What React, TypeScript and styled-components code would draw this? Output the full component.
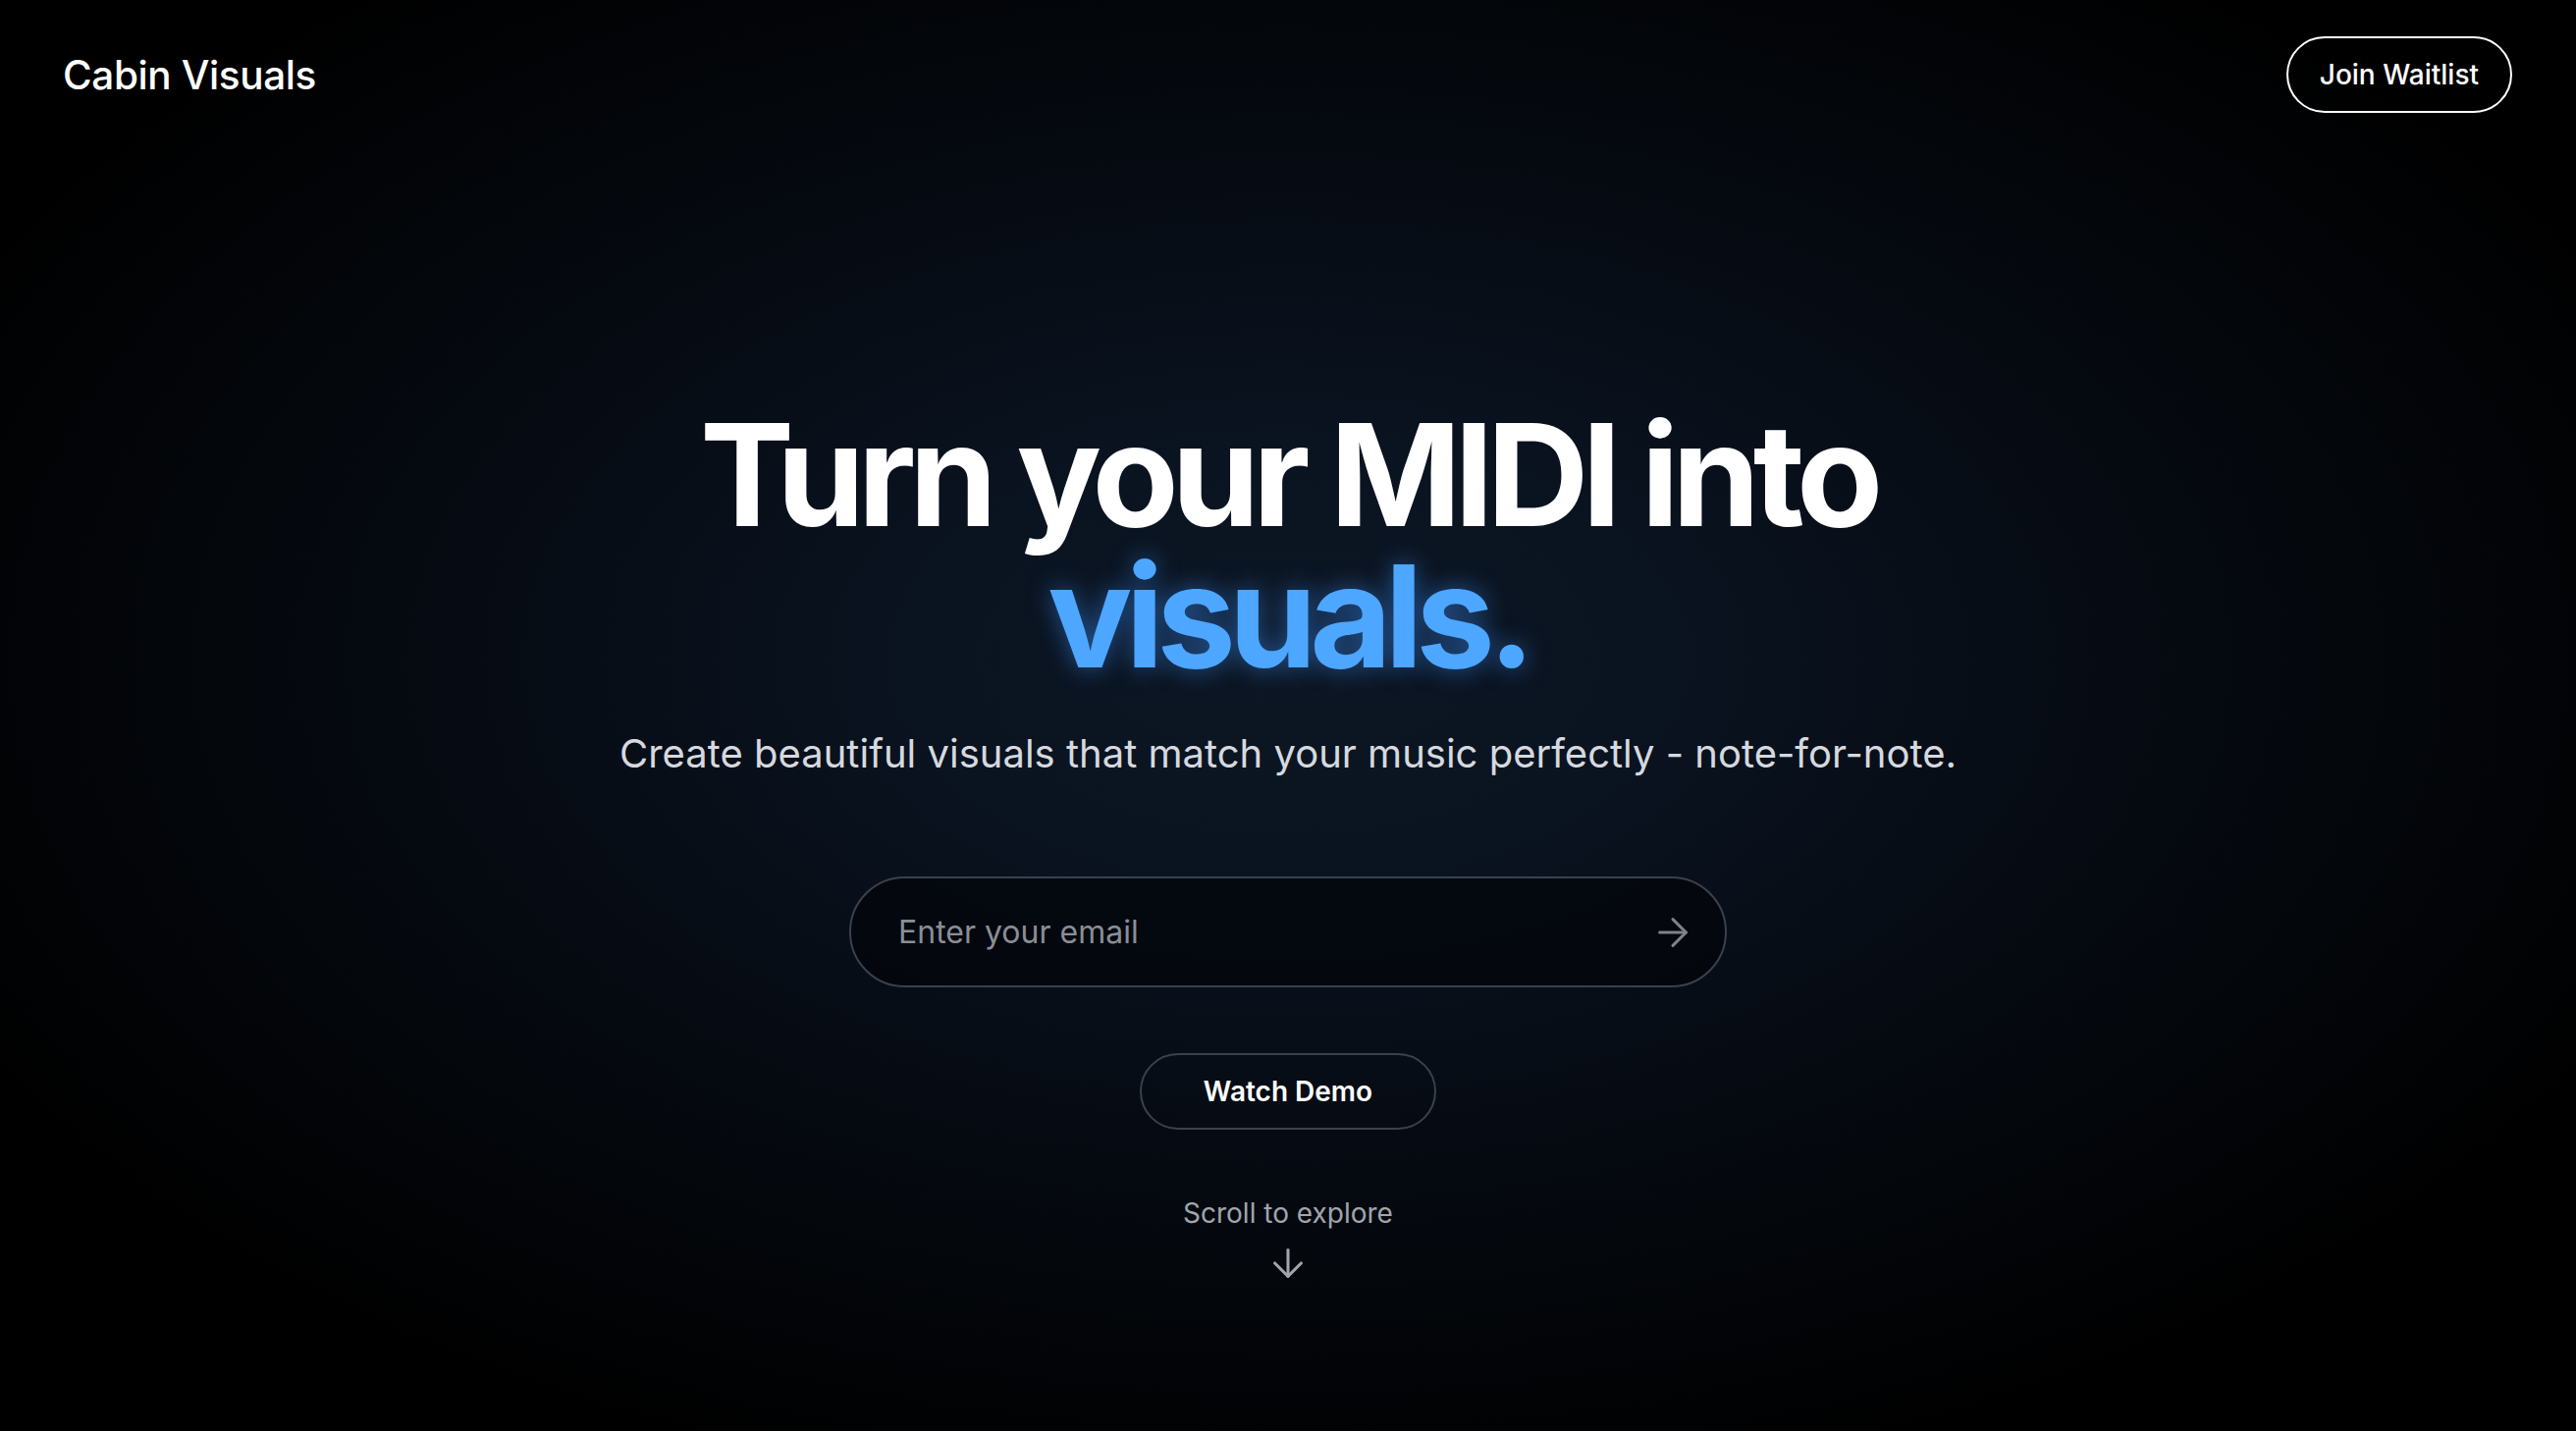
import React from "react";
import styled, { createGlobalStyle } from "styled-components";

const GlobalStyle = createGlobalStyle`
  html, body {
    margin: 0;
    padding: 0;
    background: #000;
  }
  * { box-sizing: border-box; }
  body {
    font-family: Inter, "Noto Sans", "Liberation Sans", sans-serif;
    color: #fff;
    -webkit-font-smoothing: antialiased;
  }
`;

const Page = styled.div`
  min-height: 1458px;
  width: 100%;
  background: radial-gradient(
    ellipse 58% 60% at 50% 46%,
    #0d1724 0%,
    #0a1320 25%,
    #060b13 55%,
    #000 100%
  );
  display: flex;
  flex-direction: column;
`;

const Header = styled.header`
  display: flex;
  justify-content: space-between;
  align-items: center;
  padding: 37px 65px 0 64px;
`;

const Logo = styled.div`
  font-size: 40.5px;
  font-weight: 500;
  letter-spacing: -0.01em;
  color: #fff;
`;

const PillButton = styled.button<{ $variant: "light" | "dim" }>`
  font-family: Inter, "Noto Sans", sans-serif;
  font-size: 28px;
  font-weight: ${(p) => (p.$variant === "light" ? 500 : 600)};
  color: #fff;
  background: transparent;
  border: 2px solid ${(p) => (p.$variant === "light" ? "#ffffff" : "#3a414d")};
  border-radius: 999px;
  height: 78px;
  padding: 0 ${(p) => (p.$variant === "light" ? "32px" : "63px")};
  display: inline-flex;
  align-items: center;
  justify-content: center;
  cursor: pointer;
`;

const Hero = styled.main`
  display: flex;
  flex-direction: column;
  align-items: center;
  padding-top: 297px;
`;

const Headline = styled.h1`
  margin: 0;
  font-size: 144px;
  font-weight: 700;
  line-height: 1;
  letter-spacing: -0.05em;
  text-align: center;
  color: #fff;
`;

const Accent = styled.span`
  display: block;
  color: #4da6ff;
  text-shadow: 0 0 24px rgba(59, 140, 246, 0.55);
`;

const Subtitle = styled.p`
  margin: 38px 0 0;
  font-size: 40px;
  line-height: 60px;
  font-weight: 400;
  color: #d6d9df;
  text-align: center;
`;

const EmailForm = styled.form`
  margin-top: 95px;
  width: 894px;
  height: 113px;
  border: 2px solid #3a414d;
  border-radius: 999px;
  background: rgba(3, 6, 11, 0.75);
  display: flex;
  align-items: center;
  padding: 0 30px 0 46px;
`;

const EmailInput = styled.input`
  flex: 1;
  background: transparent;
  border: none;
  outline: none;
  font-family: Inter, "Noto Sans", sans-serif;
  font-size: 32px;
  color: #fff;
  &::placeholder {
    color: #8a8e96;
  }
`;

const IconButton = styled.button`
  background: transparent;
  border: none;
  padding: 0;
  display: flex;
  align-items: center;
  justify-content: center;
  color: #7d828d;
  cursor: pointer;
`;

const DemoWrap = styled.div`
  margin-top: 67px;
`;

const ScrollHint = styled.div`
  margin-top: 65px;
  display: flex;
  flex-direction: column;
  align-items: center;
  gap: 8px;
  color: #a0a5ae;
  font-size: 28px;
  line-height: 40px;
`;

const Arrow: React.FC<{ dir: "right" | "down"; size: number }> = ({ dir, size }) => (
  <svg
    width={size}
    height={size}
    viewBox="0 0 24 24"
    fill="none"
    stroke="currentColor"
    strokeWidth={1.6}
    strokeLinecap="round"
    strokeLinejoin="round"
  >
    {dir === "right" ? (
      <>
        <path d="M5 12h14" />
        <path d="m12 5 7 7-7 7" />
      </>
    ) : (
      <>
        <path d="M12 5v14" />
        <path d="m19 12-7 7-7-7" />
      </>
    )}
  </svg>
);

export default function App() {
  return (
    <>
      <GlobalStyle />
      <Page>
        <Header>
          <Logo>Cabin Visuals</Logo>
          <PillButton $variant="light">Join Waitlist</PillButton>
        </Header>
        <Hero>
          <Headline>
            Turn your MIDI into
            <Accent>visuals.</Accent>
          </Headline>
          <Subtitle>
            Create beautiful visuals that match your music perfectly - note-for-note.
          </Subtitle>
          <EmailForm onSubmit={(e) => e.preventDefault()}>
            <EmailInput type="email" placeholder="Enter your email" />
            <IconButton type="submit" aria-label="Submit">
              <Arrow dir="right" size={46} />
            </IconButton>
          </EmailForm>
          <DemoWrap>
            <PillButton $variant="dim">Watch Demo</PillButton>
          </DemoWrap>
          <ScrollHint>
            <span>Scroll to explore</span>
            <Arrow dir="down" size={46} />
          </ScrollHint>
        </Hero>
      </Page>
    </>
  );
}
